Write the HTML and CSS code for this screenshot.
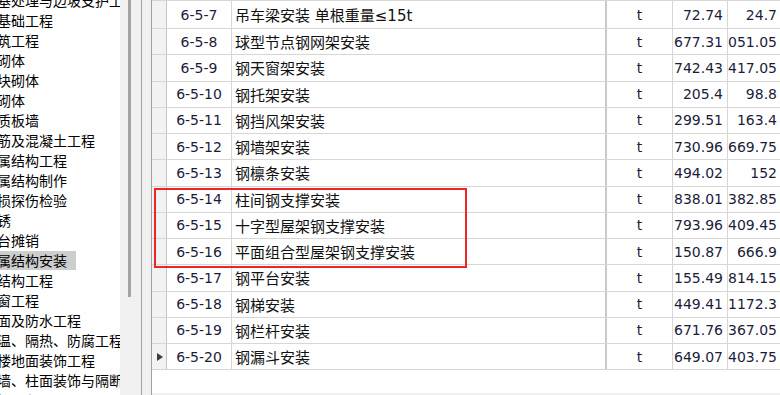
FILE: index.html
```html
<!DOCTYPE html>
<html lang="zh-CN">
<head>
  <meta charset="UTF-8" />
  <title>定额库 - 金属结构安装</title>
  <link rel="stylesheet" href="styles.css">
</head>
<body>
  <div class="app">
    <div class="tree">
      <div class="tree-pane">
        <ul class="tree-list">
          <li>基处理与边坡支护工程</li>
          <li>基础工程</li>
          <li>筑工程</li>
          <li>砌体</li>
          <li>块砌体</li>
          <li>砌体</li>
          <li>质板墙</li>
          <li>筋及混凝土工程</li>
          <li>属结构工程</li>
          <li>属结构制作</li>
          <li>损探伤检验</li>
          <li>锈</li>
          <li>台摊销</li>
          <li><span class="selected">属结构安装</span></li>
          <li>结构工程</li>
          <li>窗工程</li>
          <li>面及防水工程</li>
          <li>温、隔热、防腐工程</li>
          <li>楼地面装饰工程</li>
          <li>墙、柱面装饰与隔断、幕墙工程</li>
          <li>棚工程</li>
        </ul>
      </div>
      <div class="vscroll"><div class="thumb"></div></div>
    </div>

    <div class="splitter"></div>

    <div class="grid">
      <div class="rows" id="rows"></div>
      <div class="filler"></div>
      <div class="hscroll"></div>
    </div>

    <div class="mark"></div>
  </div>

  <script>
    const items = [
      ["6-5-7", "吊车梁安装 单根重量≤15t", "t", "72.74", "24.7"],
      ["6-5-8", "球型节点钢网架安装", "t", "677.31", "1051.05"],
      ["6-5-9", "钢天窗架安装", "t", "742.43", "417.05"],
      ["6-5-10", "钢托架安装", "t", "205.4", "98.8"],
      ["6-5-11", "钢挡风架安装", "t", "299.51", "163.4"],
      ["6-5-12", "钢墙架安装", "t", "730.96", "669.75"],
      ["6-5-13", "钢檩条安装", "t", "494.02", "152"],
      ["6-5-14", "柱间钢支撑安装", "t", "838.01", "382.85"],
      ["6-5-15", "十字型屋架钢支撑安装", "t", "793.96", "409.45"],
      ["6-5-16", "平面组合型屋架钢支撑安装", "t", "150.87", "666.9"],
      ["6-5-17", "钢平台安装", "t", "155.49", "814.15"],
      ["6-5-18", "钢梯安装", "t", "449.41", "1172.3"],
      ["6-5-19", "钢栏杆安装", "t", "671.76", "367.05"],
      ["6-5-20", "钢漏斗安装", "t", "649.07", "403.75"]
    ];

    const rows = document.getElementById("rows");
    items.forEach((it, i) => {
      const row = document.createElement("div");
      row.className = "row" + (i === 0 ? " first" : "");
      const current = i === items.length - 1;
      row.innerHTML =
        `<div class="cell c-hdr">${current ? '<span class="arrow"></span>' : ''}</div>` +
        `<div class="cell c-code">${it[0]}</div>` +
        `<div class="cell c-name">${it[1]}</div>` +
        `<div class="cell c-unit">${it[2]}</div>` +
        `<div class="cell c-num"><span>${it[3]}</span></div>` +
        `<div class="cell c-num last"><span>${it[4]}</span></div>`;
      rows.appendChild(row);
    });
  </script>
</body>
</html>
```

FILE: styles.css
```css
body {
  margin: 0;
  background-color: #f0f0f0;
  overflow: hidden;
}
.app {
  position: relative;
  display: flex;
  width: 780px;
  height: 395px;
  overflow: hidden;
}

/* left tree */
.tree {
  display: flex;
  flex: none;
  width: 141px;
  border-right: 1px solid #a0a0a0;
}
.tree-pane {
  width: 120px;
  background-color: #fff;
  overflow: hidden;
}
.tree-list {
  list-style: none;
  margin: -10px 0 0 -3px;
  padding: 0;
  font-family: "Noto Sans CJK SC", sans-serif;
  font-size: 14px;
  color: #000;
}
.tree-list li {
  height: 20px;
  line-height: 20px;
  white-space: nowrap;
}
.tree-list .selected {
  display: inline-block;
  height: 19px;
  line-height: 19px;
  padding-right: 9px;
  background-color: #cdcdcd;
}
.vscroll {
  width: 21px;
  background-color: #f0f0f0;
}
.vscroll .thumb {
  width: 3px;
  height: 297px;
  margin-left: 8px;
  background-color: #a3a3a3;
}

.splitter {
  flex: none;
  width: 9px;
}

/* data grid */
.grid {
  flex: none;
  width: 628px;
  display: flex;
  flex-direction: column;
  background-color: #fff;
  border-left: 1px solid #a0a0a0;
}
.rows {
  border-top: 1px solid #d6d6d6;
}
.row {
  display: grid;
  grid-template-columns: 15px 65px 375px 66px 55px 53px;
  height: 26.25px;
  box-sizing: border-box;
  border-bottom: 1px solid #d6d6d6;
  font-family: "DejaVu Sans", "Noto Sans CJK SC", sans-serif;
  font-size: 14px;
}
.row.first {
  height: 28px;
}
.cell {
  display: flex;
  align-items: center;
  overflow: hidden;
  white-space: nowrap;
  border-right: 1px solid #d6d6d6;
  box-sizing: border-box;
}
.c-hdr {
  justify-content: center;
  background-color: #f2f2f2;
  border-right-color: #c4c4c4;
}
.arrow {
  width: 0;
  height: 0;
  margin-left: 2px;
  border-left: 6px solid #3c3c3c;
  border-top: 4.5px solid transparent;
  border-bottom: 4.5px solid transparent;
}
.c-code {
  justify-content: center;
  color: #1c1c3a;
}
.c-name {
  padding-left: 3px;
  font-size: 15px;
  color: #111;
  border-right: 2px solid #c8c8c8;
}
.c-unit {
  justify-content: center;
  color: #1c1c3a;
}
.c-num {
  justify-content: flex-end;
  padding-right: 4px;
  color: #1c1c3a;
}
.c-num.last {
  border-right: none;
}
.filler {
  flex: 1;
}
.hscroll {
  height: 2px;
  background-color: #f0f0f0;
}

/* red annotation box drawn over the grid */
.mark {
  position: absolute;
  left: 154px;
  top: 188px;
  width: 313px;
  height: 80px;
  box-sizing: border-box;
  border: 2px solid #f02424;
}
```
